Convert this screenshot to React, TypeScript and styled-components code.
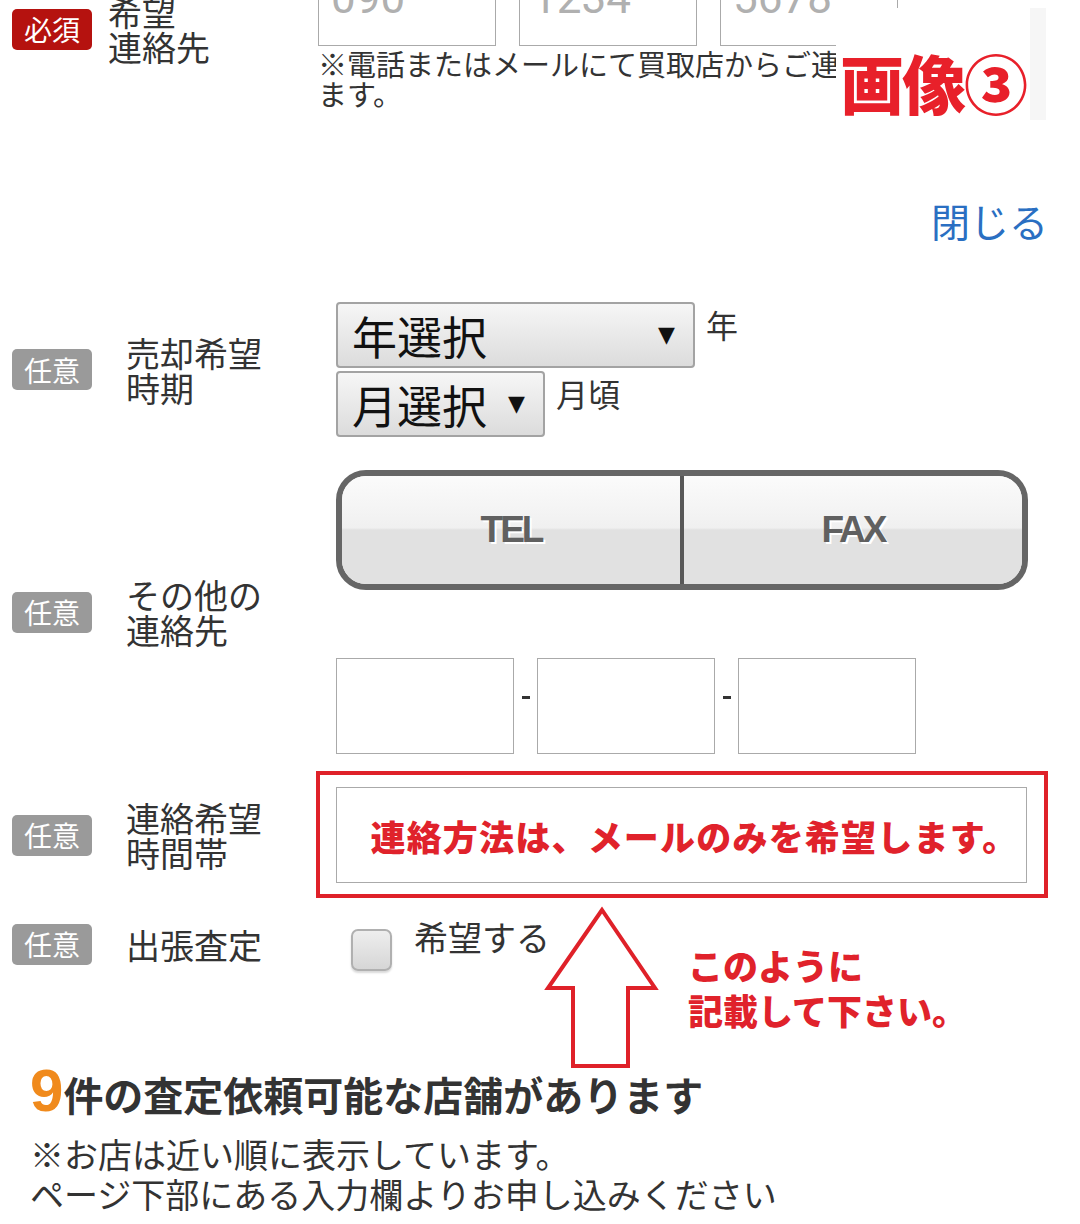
import React from "react";
import styled, { createGlobalStyle } from "styled-components";

const GlobalStyle = createGlobalStyle`
  html, body { margin: 0; padding: 0; background: #ffffff; }
  body {
    font-family: "Noto Sans CJK JP", "Noto Sans", sans-serif;
    color: #333333;
  }
  * { box-sizing: border-box; }
`;

const Page = styled.div`
  position: relative;
  width: 1080px;
  height: 1224px;
  overflow: hidden;
  display: flex;
  flex-direction: column;
`;

const FormRow = styled.div<{ $narrow?: boolean; $top?: number }>`
  display: grid;
  grid-template-columns: ${(p) => (p.$narrow ? "96px" : "114px")} 210px 1fr;
  align-items: center;
  padding-left: 12px;
  margin-top: ${(p) => p.$top ?? 33}px;
`;

const Badge = styled.span<{ $required?: boolean }>`
  display: flex;
  align-items: center;
  justify-content: center;
  width: 80px;
  height: 41px;
  border-radius: 5px;
  background: ${(p) => (p.$required ? "#b5120f" : "#9a9a9a")};
  color: #ffffff;
  font-size: 28px;
  line-height: 1;
`;

const LabelText = styled.div`
  font-size: 34px;
  line-height: 35px;
  color: #333333;
  white-space: pre-line;
`;

const FieldStack = styled.div<{ $gap?: number }>`
  display: flex;
  flex-direction: column;
  align-items: flex-start;
  gap: ${(p) => p.$gap ?? 0}px;
`;

const PhoneGroup = styled.div`
  display: flex;
  align-items: center;
`;

const TextBox = styled.div<{ $w: number }>`
  width: ${(p) => p.$w}px;
  height: 96px;
  border: 1px solid #aaaaaa;
  background: #ffffff;
  display: flex;
  align-items: center;
  padding-left: 12px;
  font-family: Roboto, "Noto Sans", sans-serif;
  font-size: 44px;
  color: #b0b0b0;
`;

const Dash = styled.span`
  display: flex;
  justify-content: center;
  width: 23px;
  margin-top: -18px;
  &::before {
    content: "";
    width: 8px;
    height: 3px;
    background: #333333;
  }
`;

const Note = styled.p`
  margin: 2px 0 0;
  width: 600px;
  font-size: 29px;
  line-height: 30px;
  color: #333333;
`;

const CloseRow = styled.div`
  display: flex;
  justify-content: flex-end;
  padding-right: 32px;
  margin-top: 88px;
`;

const CloseLink = styled.a`
  font-size: 39px;
  line-height: 48px;
  color: #2a6fc2;
  text-decoration: none;
`;

const SelectLine = styled.div`
  display: flex;
  align-items: flex-start;
  gap: 11px;
`;

const SelectBox = styled.div<{ $w: number }>`
  width: ${(p) => p.$w}px;
  height: 66px;
  border: 2px solid #a3a3a3;
  border-radius: 4px;
  background: linear-gradient(#f6f6f6, #dcdcdc);
  display: flex;
  align-items: center;
  justify-content: space-between;
  padding: 0 18px 0 14px;
  font-size: 45px;
  line-height: 1;
  color: #111111;
`;

const Caret = styled.span`
  font-family: "DejaVu Sans", sans-serif;
  font-size: 22px;
  color: #111111;
`;

const Suffix = styled.span`
  font-size: 32px;
  line-height: 40px;
  color: #333333;
  margin-top: 2px;
`;

const Segmented = styled.div`
  display: flex;
  width: 692px;
  height: 120px;
  border: 6px solid #666666;
  border-radius: 30px;
  overflow: hidden;
`;

const Segment = styled.div<{ $divider?: boolean }>`
  flex: 1;
  display: flex;
  align-items: center;
  justify-content: center;
  background: linear-gradient(#fbfbfb 0%, #f0f0f0 48%, #e1e1e1 50%, #e1e1e1 100%);
  border-left: ${(p) => (p.$divider ? "4px solid #585858" : "none")};
  font-family: "Liberation Sans", Arial, sans-serif;
  font-weight: bold;
  font-size: 37px;
  letter-spacing: -3px;
  color: #606060;
  text-shadow: 2px 2px 0 #ffffff;
`;

const HighlightFrame = styled.div`
  position: relative;
  &::before {
    content: "";
    position: absolute;
    top: -16px;
    left: -20px;
    right: -21px;
    bottom: -15px;
    border: 4px solid #df2129;
    pointer-events: none;
  }
`;

const MessageBox = styled.div`
  width: 691px;
  height: 96px;
  border: 1px solid #aaaaaa;
  display: flex;
  align-items: center;
  justify-content: center;
  padding-left: 26px;
  font-size: 35px;
  font-weight: 900;
  color: #e0222b;
  letter-spacing: 1.2px;
`;

const CheckLine = styled.div`
  display: flex;
  align-items: flex-start;
  gap: 22px;
  padding-left: 15px;
`;

const CheckBox = styled.span`
  width: 41px;
  height: 42px;
  margin-top: 12px;
  border: 2px solid #b0b0b0;
  border-radius: 7px;
  background: linear-gradient(#eeeeee, #d6d6d6);
  box-shadow: 0 2px 2px rgba(0, 0, 0, 0.15);
`;

const CheckText = styled.span`
  font-size: 34px;
  line-height: 40px;
  color: #333333;
`;

const ShopSummary = styled.section`
  margin-top: 90px;
  padding-left: 30px;
`;

const SummaryHeading = styled.h2`
  margin: 0;
  font-size: 40px;
  font-weight: bold;
  line-height: 60px;
  color: #333333;
`;

const Count = styled.span`
  font-family: "Liberation Sans", Arial, sans-serif;
  font-size: 60px;
  font-weight: bold;
  color: #f08a1c;
`;

const SummaryNote = styled.p`
  margin: 10px 0 0;
  font-size: 34px;
  line-height: 40px;
  color: #333333;
`;

const Stamp = styled.div`
  position: absolute;
  left: 836px;
  top: 8px;
  width: 194px;
  height: 112px;
  background: #ffffff;
  box-shadow: 16px 0 0 #f6f6f6;
  display: flex;
  align-items: flex-end;
  padding: 0 0 7px 4px;
  font-size: 64px;
  font-weight: 900;
  line-height: 1;
  color: #e8202a;
  letter-spacing: -2px;
`;

const Annotation = styled.div`
  position: absolute;
  left: 544px;
  top: 906px;
  display: flex;
  align-items: flex-start;
  gap: 28px;
`;

const AnnotationText = styled.p`
  margin: 36px 0 0;
  font-size: 35px;
  font-weight: 900;
  line-height: 45px;
  color: #e0222b;
`;

const phoneWidths = [178, 178, 178];

function PhoneInputs({ placeholders }: { placeholders?: string[] }) {
  return (
    <PhoneGroup>
      {phoneWidths.map((w, i) => (
        <React.Fragment key={i}>
          {i > 0 && <Dash aria-label="-" />}
          <TextBox $w={w}>{placeholders ? placeholders[i] : ""}</TextBox>
        </React.Fragment>
      ))}
    </PhoneGroup>
  );
}

export default function App() {
  return (
    <>
      <GlobalStyle />
      <Page>
        <FormRow $narrow $top={-50}>
          <Badge $required>必須</Badge>
          <LabelText>{"希望\n連絡先"}</LabelText>
          <FieldStack>
            <PhoneInputs placeholders={["090", "1234", "5678"]} />
            <Note>※電話またはメールにて買取店からご連絡します。</Note>
          </FieldStack>
        </FormRow>

        <CloseRow>
          <CloseLink href="#">閉じる</CloseLink>
        </CloseRow>

        <FormRow $top={58}>
          <Badge>任意</Badge>
          <LabelText>{"売却希望\n時期"}</LabelText>
          <FieldStack $gap={3}>
            <SelectLine>
              <SelectBox $w={359}>
                年選択<Caret>▼</Caret>
              </SelectBox>
              <Suffix>年</Suffix>
            </SelectLine>
            <SelectLine>
              <SelectBox $w={209}>
                月選択<Caret>▼</Caret>
              </SelectBox>
              <Suffix>月頃</Suffix>
            </SelectLine>
          </FieldStack>
        </FormRow>

        <FormRow>
          <Badge>任意</Badge>
          <LabelText>{"その他の\n連絡先"}</LabelText>
          <FieldStack $gap={68}>
            <Segmented>
              <Segment>TEL</Segment>
              <Segment $divider>FAX</Segment>
            </Segmented>
            <PhoneInputs />
          </FieldStack>
        </FormRow>

        <FormRow>
          <Badge>任意</Badge>
          <LabelText>{"連絡希望\n時間帯"}</LabelText>
          <FieldStack>
            <HighlightFrame>
              <MessageBox>連絡方法は、メールのみを希望します。</MessageBox>
            </HighlightFrame>
          </FieldStack>
        </FormRow>

        <FormRow $top={34}>
          <Badge>任意</Badge>
          <LabelText>出張査定</LabelText>
          <CheckLine>
            <CheckBox />
            <CheckText>希望する</CheckText>
          </CheckLine>
        </FormRow>

        <ShopSummary>
          <SummaryHeading>
            <Count>9</Count>件の査定依頼可能な店舗があります
          </SummaryHeading>
          <SummaryNote>
            ※お店は近い順に表示しています。
            <br />
            ページ下部にある入力欄よりお申し込みください
          </SummaryNote>
        </ShopSummary>

        <Stamp>画像③</Stamp>

        <Annotation>
          <svg width="116" height="166" viewBox="0 0 116 166" aria-hidden="true">
            <polygon
              points="58,4 4,82 29,82 29,160 84,160 84,82 111,82"
              fill="none"
              stroke="#df2129"
              strokeWidth="4"
              strokeLinejoin="miter"
            />
          </svg>
          <AnnotationText>
            このように
            <br />
            記載して下さい。
          </AnnotationText>
        </Annotation>
      </Page>
    </>
  );
}
